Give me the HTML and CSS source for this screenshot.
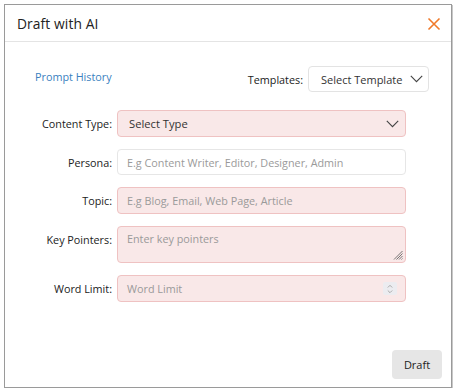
FILE: index.html
```html
<!DOCTYPE html>
<html>
<head>
<meta charset="utf-8">
<link rel="stylesheet" href="styles.css">
</head>
<body>
<div class="dialog">
  <div class="header">
    <span class="title">Draft with AI</span>
    <svg class="close" width="14" height="14" viewBox="0 0 14 14"><path d="M1.5 1.5 L12.5 12.5 M12.5 1.5 L1.5 12.5" stroke="#f07a2a" stroke-width="1.6" fill="none"/></svg>
  </div>
  <div class="body">
    <div class="toprow">
      <a class="link">Prompt History</a>
      <div class="templates">
        <span class="tlabel">Templates:</span>
        <div class="tselect">
          <span>Select Template</span>
          <svg width="13" height="8" viewBox="0 0 13 8"><path d="M0.8 0.8 L6.5 6.6 L12.2 0.8" stroke="#444" stroke-width="1.1" fill="none"/></svg>
        </div>
      </div>
    </div>
    <div class="form">
      <label class="lbl">Content Type:</label>
      <div class="field pink select">
        <span class="val">Select Type</span>
        <svg width="13" height="8" viewBox="0 0 13 8"><path d="M0.8 0.8 L6.5 6.6 L12.2 0.8" stroke="#444" stroke-width="1.1" fill="none"/></svg>
      </div>
      <label class="lbl">Persona:</label>
      <div class="field white"><span class="ph">E.g Content Writer, Editor, Designer, Admin</span></div>
      <label class="lbl">Topic:</label>
      <div class="field pink"><span class="ph">E.g Blog, Email, Web Page, Article</span></div>
      <label class="lbl top">Key Pointers:</label>
      <div class="field pink area">
        <span class="ph">Enter key pointers</span>
        <svg class="grip" width="10" height="10" viewBox="0 0 10 10"><path d="M9.5 1 L1 9.5 M9.5 3.5 L3.5 9.5 M9.5 6 L6 9.5 M9.5 8.5 L8.5 9.5" stroke="#666" stroke-width="0.9" fill="none"/></svg>
      </div>
      <label class="lbl">Word Limit:</label>
      <div class="field pink num">
        <span class="ph">Word Limit</span>
        <span class="spin"><svg width="6" height="10" viewBox="0 0 6 10"><path d="M0.8 3.5 L3 1.3 L5.2 3.5 M0.8 6.5 L3 8.7 L5.2 6.5" stroke="#999" stroke-width="0.8" fill="none"/></svg></span>
      </div>
    </div>
  </div>
  <div class="footer">
    <button class="draft">Draft</button>
  </div>
</div>
</body>
</html>
```
FILE: styles.css
```css
* { box-sizing: border-box; }
html, body { margin: 0; padding: 0; background: #fff; }
body { font-family: "Open Sans", "Noto Sans", sans-serif; color: #222; }
.dialog {
  margin: 4px 0 0 4px;
  width: 448px;
  height: 384px;
  border: 1px solid #9a9a9a;
  box-shadow: 1px 1px 0 #c8c8c8;
  display: flex;
  flex-direction: column;
  background: #fff;
}
.header {
  height: 37px;
  border-bottom: 1px solid #e4e4e4;
  display: flex;
  align-items: center;
  justify-content: space-between;
  padding: 0 10px 0 12px;
}
.title { font-size: 13.8px; color: #222; letter-spacing: 0.1px; }
.close { margin-top: 1px; }
.body { flex: 1; padding-top: 24px; }
.toprow {
  display: flex;
  justify-content: space-between;
  align-items: flex-start;
  padding: 0 22px 0 30px;
}
.link { color: #3a7fc0; font-size: 10.8px; margin-top: 3px; }
.templates { display: flex; align-items: center; gap: 5px; }
.tlabel { font-size: 10.8px; font-weight: 500; color: #222; white-space: nowrap; }
.tselect {
  width: 121px;
  height: 26px;
  border: 1px solid #e3e3e3;
  border-radius: 4px;
  display: flex;
  align-items: center;
  justify-content: space-between;
  padding: 0 5px 0 12px;
  font-size: 11px;
  color: #333;
  white-space: nowrap;
}
.form {
  display: grid;
  grid-template-columns: 107px 289px;
  column-gap: 5px;
  row-gap: 12px;
  margin-top: 18px;
}
.lbl {
  text-align: right;
  font-size: 10.8px;
  font-weight: 500;
  color: #222;
  align-self: center;
}
.lbl.top { align-self: start; padding-top: 6px; }
.field {
  height: 27px;
  border-radius: 4px;
  display: flex;
  align-items: center;
  padding: 0 9px;
  font-size: 10.8px;
  position: relative;
  white-space: nowrap;
}
.pink { background: #f9e8e8; border: 1px solid #efc2c2; }
.white { background: #fff; border: 1px solid #e6e6e6; height: 26px; }
.select { justify-content: space-between; padding-right: 6px; padding-left: 11px; }
.val { color: #333; font-size: 11.2px; }
.ph { color: #9a9a9a; }
.area { height: 37px; align-items: flex-start; padding-top: 4px; }
.grip { position: absolute; right: 2px; bottom: 2px; }
.num { justify-content: space-between; padding-right: 8px; }
.spin {
  width: 14px;
  height: 13px;
  background: #ececf0;
  border-radius: 2px;
  display: flex;
  align-items: center;
  justify-content: center;
}
.footer {
  display: flex;
  justify-content: flex-end;
  padding: 0 9px 8px 0;
}
.draft {
  width: 50px;
  height: 29px;
  border: none;
  border-radius: 4px;
  background: #e6e6e6;
  font-family: inherit;
  font-size: 11px;
  font-weight: 500;
  color: #222;
  padding: 0;
}
```
